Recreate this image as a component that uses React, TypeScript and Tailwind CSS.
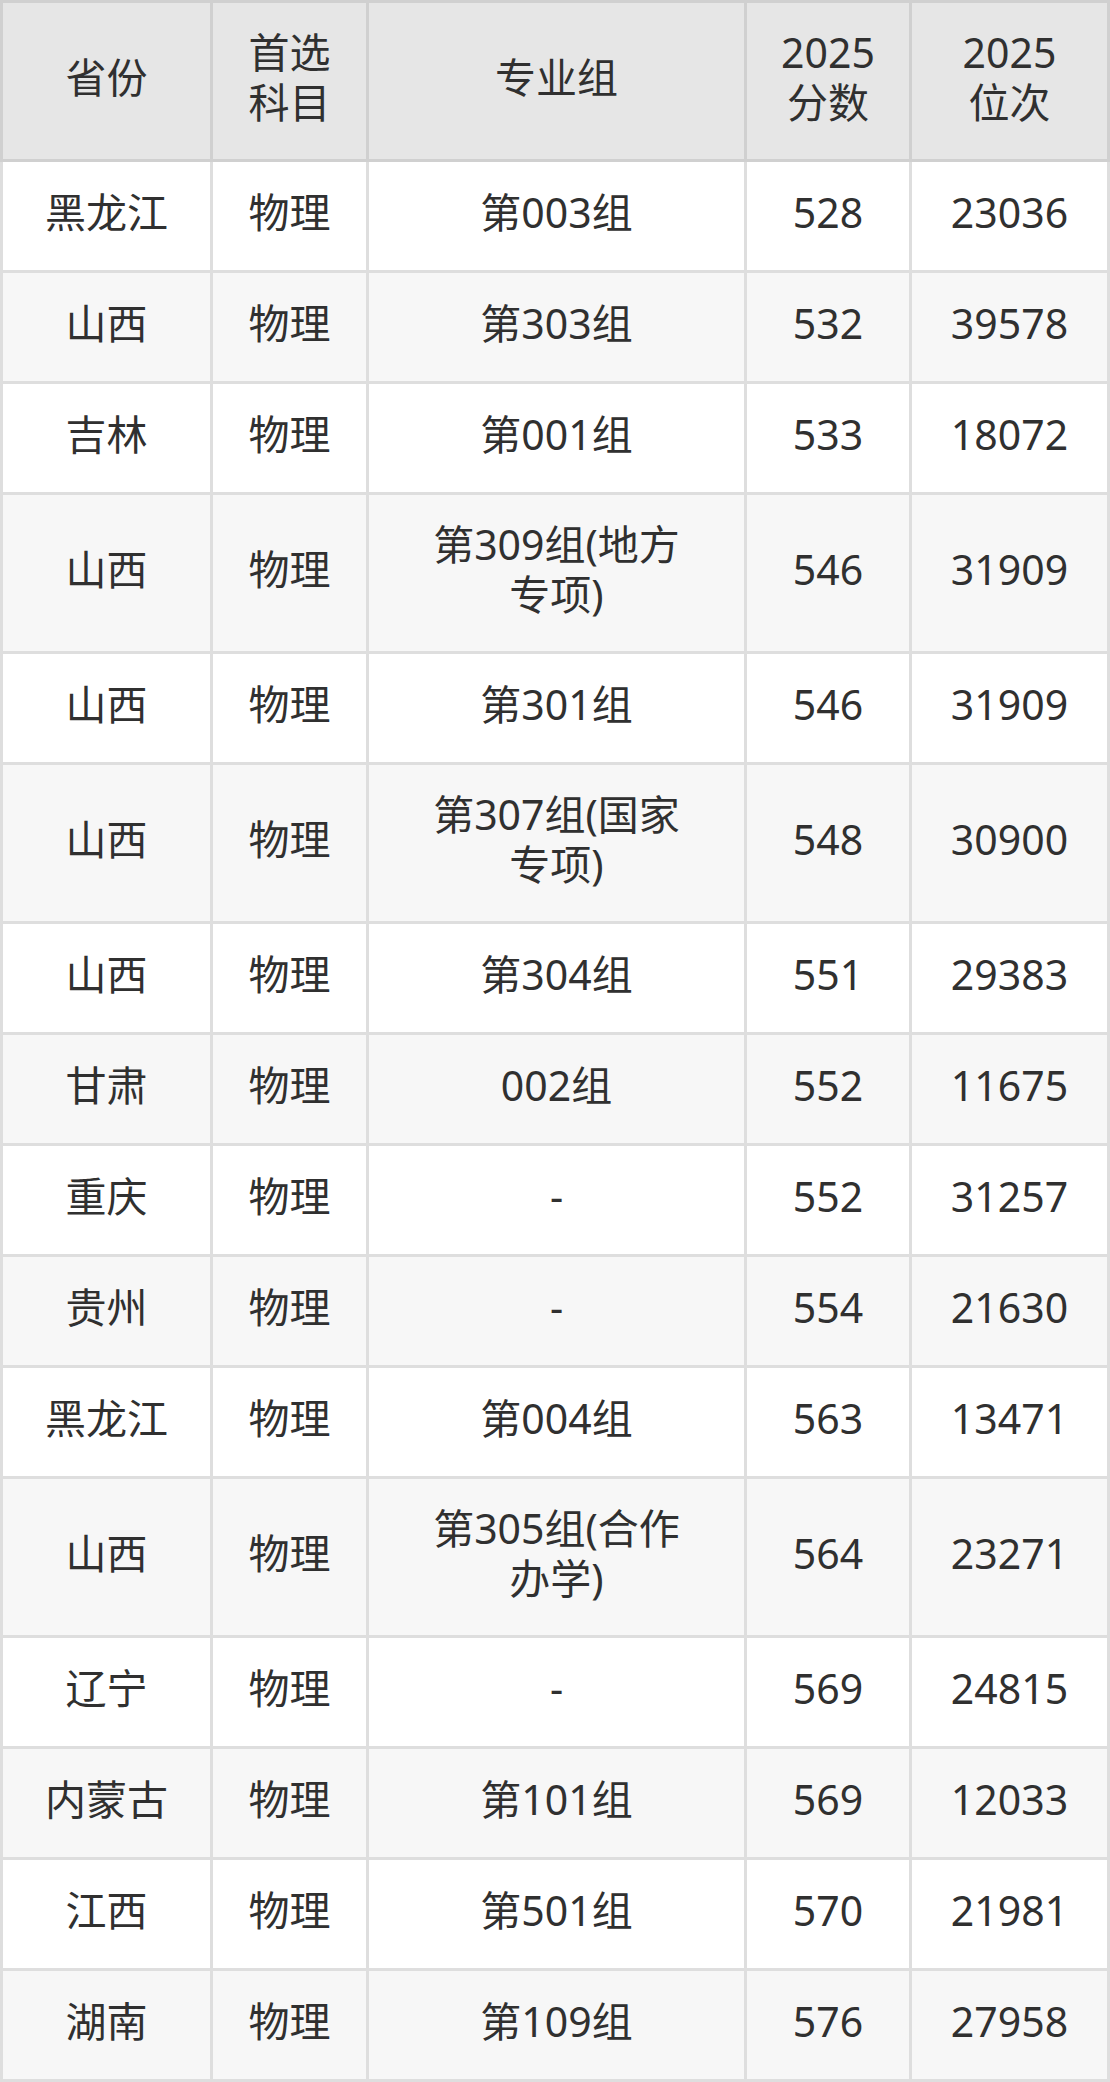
import React from "react";

// 各省录取分数表：表头灰底，正文斑马纹
type Row = { prov: string; subj: string; group: string; score: string; rank: string };

const ROWS: Row[] = [
  { prov: "黑龙江", subj: "物理", group: "第003组", score: "528", rank: "23036" },
  { prov: "山西", subj: "物理", group: "第303组", score: "532", rank: "39578" },
  { prov: "吉林", subj: "物理", group: "第001组", score: "533", rank: "18072" },
  { prov: "山西", subj: "物理", group: "第309组(地方专项)", score: "546", rank: "31909" },
  { prov: "山西", subj: "物理", group: "第301组", score: "546", rank: "31909" },
  { prov: "山西", subj: "物理", group: "第307组(国家专项)", score: "548", rank: "30900" },
  { prov: "山西", subj: "物理", group: "第304组", score: "551", rank: "29383" },
  { prov: "甘肃", subj: "物理", group: "002组", score: "552", rank: "11675" },
  { prov: "重庆", subj: "物理", group: "-", score: "552", rank: "31257" },
  { prov: "贵州", subj: "物理", group: "-", score: "554", rank: "21630" },
  { prov: "黑龙江", subj: "物理", group: "第004组", score: "563", rank: "13471" },
  { prov: "山西", subj: "物理", group: "第305组(合作办学)", score: "564", rank: "23271" },
  { prov: "辽宁", subj: "物理", group: "-", score: "569", rank: "24815" },
  { prov: "内蒙古", subj: "物理", group: "第101组", score: "569", rank: "12033" },
  { prov: "江西", subj: "物理", group: "第501组", score: "570", rank: "21981" },
  { prov: "湖南", subj: "物理", group: "第109组", score: "576", rank: "27958" },
];

const COLS = "grid grid-cols-[213px_156px_378px_165px_198px]";
const CELL = "flex items-center justify-center text-center border-r-[3px] border-b-[3px] px-4 pb-[8px]";

export default function App() {
  return (
    <div
      className="w-[1110px] bg-white text-[#303030] text-[41px] leading-[50px]"
      style={{ fontFamily: '"Noto Sans", "Noto Sans CJK SC", sans-serif' }}
    >
      {/* 表头 */}
      <div className={`${COLS} h-[162px] bg-[#e6e6e6]`}>
        {["省份", "首选科目", "专业组", "2025分数", "2025位次"].map((h, i) => (
          <div
            key={h}
            className={`${CELL} border-t-[3px] border-[#d0d0d0] ${i === 0 ? "border-l-[3px]" : ""} ${
              i === 2 ? "px-[50px]" : ""
            }`}
          >
            {h === "2025分数" ? (
              <span>2025<br />分数</span>
            ) : h === "2025位次" ? (
              <span>2025<br />位次</span>
            ) : h === "首选科目" ? (
              <span>首选<br />科目</span>
            ) : (
              h
            )}
          </div>
        ))}
      </div>

      {ROWS.map((r, idx) => {
        const tall = r.group.includes("(");
        return (
          <div
            key={idx}
            className={`${COLS} ${tall ? "h-[159px]" : "h-[111px]"} ${idx % 2 === 1 ? "bg-[#f7f7f7]" : "bg-white"}`}
          >
            <div className={`${CELL} border-l-[3px] border-[#dedede]`}>{r.prov}</div>
            <div className={`${CELL} border-[#dedede]`}>{r.subj}</div>
            <div className={`${CELL} border-[#dedede] px-[50px]`}>{r.group}</div>
            <div className={`${CELL} border-[#dedede]`}>{r.score}</div>
            <div className={`${CELL} border-[#dedede]`}>{r.rank}</div>
          </div>
        );
      })}
    </div>
  );
}
